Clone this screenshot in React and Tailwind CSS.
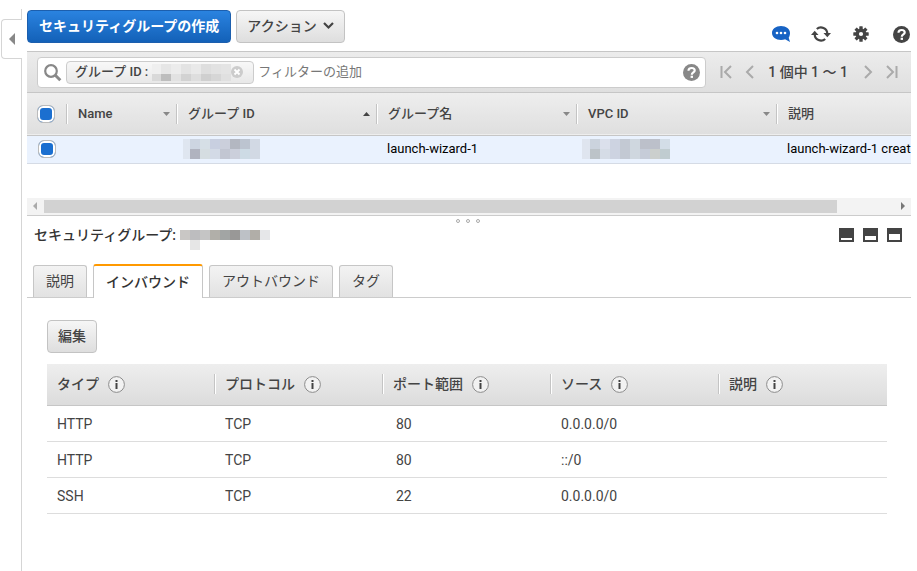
import { useState } from 'react'

const FONT = "font-[Roboto,'Noto_Sans_CJK_JP',sans-serif]"

const BUTTON =
  'flex h-[33px] items-center rounded-[4px] border border-[#c3c3c3] bg-linear-to-b from-[#f6f6f6] to-[#dedede] text-sm font-medium text-[#444]'

const groupColumns = [
  { id: 'name', label: 'Name', width: 'w-[110px]', sort: 'down' },
  { id: 'groupId', label: 'グループ ID', width: 'w-[200px]', sort: 'up' },
  { id: 'groupName', label: 'グループ名', width: 'w-[200px]', sort: 'down' },
  { id: 'vpc', label: 'VPC ID', width: 'w-[200px]', sort: 'down' },
  { id: 'description', label: '説明', width: 'w-[400px]' },
]

const tabs = ['説明', 'インバウンド', 'アウトバウンド', 'タグ']

const ruleColumns = ['タイプ', 'プロトコル', 'ポート範囲', 'ソース', '説明']

const rules = [
  { type: 'HTTP', protocol: 'TCP', port: '80', source: '0.0.0.0/0' },
  { type: 'HTTP', protocol: 'TCP', port: '80', source: '::/0' },
  { type: 'SSH', protocol: 'TCP', port: '22', source: '0.0.0.0/0' },
]

// masked values, each row is a list of 10px cells, cut is taken off the left
const masks = {
  filter: {
    cut: 1,
    height: 17,
    rows: [
      ['#efefef', '#e6e6e6', '#ececec', '#e3e3e3', '#e9e9e9', '#dedede', '#e2e2e2', '#e4e4e4'],
      ['#d9d9d9', '#bdbdbd', '#e2e2e2', '#d2d2d2', '#dedede', '#cfcfcf', '#d6d6d6', '#e0e0e0'],
    ],
  },
  groupId: {
    cut: 3,
    height: 20,
    rows: [
      ['#dfe6f0', '#cdd5e1', '#d6dfe6', '#c8cfe0', '#cbcfdb', '#b3b7c1', '#bcc4d0', '#d2d9e4'],
      ['#dfe6f0', '#b0b3bf', '#d5dde1', '#d3dae6', '#c2c6d2', '#cbcfdb', '#cddbe5', '#d2d9e4'],
    ],
  },
  vpc: {
    cut: 2,
    height: 20,
    rows: [
      ['#dfe5ef', '#cbd3dd', '#dbe0ec', '#cdd3e1', '#c3c9d3', '#cfd7df', '#bcc0ca', '#bcc0ca', '#d3dde7'],
      ['#dfe5ef', '#bcc3c8', '#d5dce6', '#cdd3e1', '#c3c9d3', '#cfd7df', '#c6ccd8', '#cbcfcd', '#c0ccd0'],
    ],
  },
  title: {
    cut: 0,
    height: 20,
    rows: [
      ['#c9c7c5', '#bdbdbf', '#c5c5c5', '#b1afa9', '#a2a5a4', '#999897', '#bdc1c6', '#b1aea8', '#e6e7e9'],
      ['#ffffff', '#e6e6e6'],
    ],
  },
}

function Mask({ name }) {
  const { rows, height, cut } = masks[name]
  const width = rows[0].length * 10 - cut
  return (
    <svg width={width} height={height} viewBox={`${cut} 0 ${width} ${height}`} className="block shrink-0" shapeRendering="crispEdges" aria-hidden="true">
      {rows.map((row, y) =>
        row.map((color, x) => (
          <rect key={`${x}-${y}`} x={x * 10} y={y * 10} width="10" height="10" fill={color} />
        ))
      )}
    </svg>
  )
}

function CommentIcon() {
  return (
    <svg width="20" height="18" viewBox="0 0 20 18" aria-hidden="true">
      <path d="M10 1C4.800 1 1 4 1 8s3.800 7 9 7c1.500 0 2.900-.2 4.100-.7L19 17l-1.300-4.300C18.500 11.400 19 9.800 19 8c0-4-3.800-7-9-7z" fill="#1763c4" />
      <circle cx="6" cy="8" r="1.300" fill="#fff" />
      <circle cx="10" cy="8" r="1.300" fill="#fff" />
      <circle cx="14" cy="8" r="1.300" fill="#fff" />
    </svg>
  )
}

function RefreshIcon() {
  return (
    <svg width="20" height="18" viewBox="0 0 20 18" fill="none" stroke="#444" strokeWidth="2.200" aria-hidden="true">
      <path d="M5.800 4A6.300 6.300 0 0 1 16.300 8.500" />
      <path d="M14.200 14A6.300 6.300 0 0 1 3.700 9.500" />
      <path d="M12.500 8H20l-3.700 4.300z" fill="#444" stroke="none" />
      <path d="M0 10h7.500L3.700 5.700z" fill="#444" stroke="none" />
    </svg>
  )
}

function GearIcon() {
  return (
    <svg width="16" height="16" viewBox="-8 -8 16 16" aria-hidden="true">
      {[0, 45, 90, 135].map((angle) => (
        <rect key={angle} x="-1.700" y="-7.700" width="3.400" height="15.400" rx=".5" fill="#444" transform={`rotate(${angle})`} />
      ))}
      <circle r="5.400" fill="#444" />
      <circle r="2.100" fill="#fff" />
    </svg>
  )
}

function HelpIcon({ color }) {
  return (
    <svg width="17" height="17" viewBox="0 0 17 17" aria-hidden="true">
      <circle cx="8.500" cy="8.500" r="8.500" fill={color} />
      <path d="M5.500 6.700c0-1.700 1.300-2.700 3.100-2.700s3.100 1 3.100 2.500c0 2-2.900 1.900-2.900 4.200" fill="none" stroke="#fff" strokeWidth="2.200" />
      <rect x="7.600" y="11.700" width="2.400" height="2.200" fill="#fff" />
    </svg>
  )
}

function InfoIcon() {
  return (
    <svg width="17" height="17" viewBox="0 0 17 17" aria-hidden="true">
      <circle cx="8.500" cy="8.500" r="7.900" fill="#f2f2f2" stroke="#8c8c8c" />
      <rect x="7.500" y="4" width="2" height="2" fill="#444" />
      <rect x="7.500" y="7" width="2" height="6" fill="#444" />
    </svg>
  )
}

function PageIcon({ d }) {
  return (
    <svg width="12" height="14" viewBox="0 0 12 14" fill="none" stroke="#aaa" strokeWidth="2" aria-hidden="true">
      <path d={d} />
    </svg>
  )
}

// dark square with a white pane, the pane height tells the split
function PaneIcon({ pane }) {
  return (
    <svg width="15" height="14" viewBox="0 0 15 14" shapeRendering="crispEdges" aria-hidden="true">
      <rect width="15" height="14" fill="#444" />
      <rect x="2" y={12 - pane} width="11" height={pane} fill="#fff" />
    </svg>
  )
}

function Checkbox({ label, checked, onChange }) {
  return (
    <input
      type="checkbox"
      aria-label={label}
      checked={checked}
      onChange={onChange}
      className="block size-[18px] appearance-none rounded-[6px] border border-[#bbb] bg-white checked:bg-[#1b6fd0] checked:shadow-[inset_0_0_0_2px_#fff]"
    />
  )
}

function Toolbar() {
  return (
    <div className="flex items-center gap-[5px] pt-[9px] pb-2">
      <button className="h-[33px] rounded-[4px] border border-[#1c5fae] bg-linear-to-b from-[#2a83e0] to-[#1361b8] px-[11px] text-sm font-bold text-white">
        セキュリティグループの作成
      </button>
      <button className={`${BUTTON} gap-[6px] px-[10px]`}>
        アクション
        <svg width="11" height="8" viewBox="0 0 11 8" fill="none" stroke="#444" strokeWidth="2.200" aria-hidden="true">
          <path d="M1 1l4.500 4.500L10 1" />
        </svg>
      </button>
      <div className="ml-auto flex items-center gap-5 pt-4">
        <button aria-label="フィードバック" className="flex w-5 justify-center"><CommentIcon /></button>
        <button aria-label="更新" className="flex w-5 justify-center"><RefreshIcon /></button>
        <button aria-label="設定" className="flex w-5 justify-center"><GearIcon /></button>
        <button aria-label="ヘルプ" className="flex w-5 justify-center"><HelpIcon color="#444" /></button>
      </div>
    </div>
  )
}

function FilterBar() {
  return (
    <div className="flex h-[42px] items-center border-y border-[#c6c6c6] bg-linear-to-b from-[#ececec] to-[#dfdfdf] pl-[10px] pr-[13px]">
      <div className="flex h-[31px] min-w-0 flex-1 items-center rounded-[4px] border border-[#ccc] bg-white pl-[5px] pr-[5px]">
        <svg width="19" height="19" viewBox="0 0 19 19" fill="none" stroke="#888" aria-hidden="true">
          <circle cx="8" cy="8" r="5.800" strokeWidth="2.200" />
          <path d="M12.300 12.300l5 5" strokeWidth="3" />
        </svg>
        <span className="ml-1 flex h-[23px] shrink-0 items-center rounded-[4px] border border-[#ccc] bg-linear-to-b from-[#f8f8f8] to-[#e8e8e8] pl-2 pr-[10px] text-[13px] font-medium text-[#444]">
          <span className="mr-1">グループ ID :</span>
          <Mask name="filter" />
          <button aria-label="フィルターを削除">
            <svg width="12" height="12" viewBox="0 0 12 12" aria-hidden="true">
              <circle cx="6" cy="6" r="6" fill="#ccc" />
              <path d="M3.500 3.500l5 5M8.500 3.500l-5 5" stroke="#fff" strokeWidth="1.800" />
            </svg>
          </button>
        </span>
        <input
          type="text"
          aria-label="フィルターの追加"
          placeholder="フィルターの追加"
          className="ml-1 min-w-0 flex-1 text-[13px] text-[#444] outline-none placeholder:text-[#777]"
        />
        <button aria-label="検索のヘルプ"><HelpIcon color="#888" /></button>
      </div>
      <div className="ml-[14px] flex items-center gap-3 text-sm font-medium text-[#444]">
        <button aria-label="最初のページ"><PageIcon d="M1.500 1v12M11 1L5 7l6 6" /></button>
        <button aria-label="前のページ"><PageIcon d="M9 1L3 7l6 6" /></button>
        <span className="pr-[2px]">1 個中 1 ～ 1</span>
        <button aria-label="次のページ"><PageIcon d="M3 1l6 6-6 6" /></button>
        <button aria-label="最後のページ"><PageIcon d="M1 1l6 6-6 6M10.500 1v12" /></button>
      </div>
    </div>
  )
}

function GroupTable() {
  const [selected, setSelected] = useState(true)
  const toggle = () => setSelected(!selected)

  return (
    <div className="overflow-hidden">
      <table className="w-[1150px] table-fixed text-left text-[13px]">
        <thead>
          <tr className="h-[42px] border-b border-[#c6c6c6] bg-linear-to-b from-[#eee] to-[#dfdfdf] text-[#444]">
            <th className="w-10 pl-[10px]">
              <Checkbox label="すべて選択" checked={selected} onChange={toggle} />
            </th>
            {groupColumns.map((column) => (
              <th key={column.id} className={`${column.width} font-medium`}>
                <div className="-ml-px flex h-5 items-center border-l border-[#c4c4c4] pl-[11px] pr-[7px] shadow-[inset_1px_0_0_#fff]">
                  <span className="flex-1">{column.label}</span>
                  {column.sort && (
                    <svg width="7" height="4" viewBox="0 0 7 4" aria-hidden="true">
                      <path
                        d={column.sort === 'up' ? 'M0 4h7L3.500 0z' : 'M0 0h7L3.500 4z'}
                        fill={column.sort === 'up' ? '#444' : '#888'}
                      />
                    </svg>
                  )}
                </div>
              </th>
            ))}
          </tr>
        </thead>
        <tbody>
          <tr className="h-7 border-b border-[#d5dbe5] bg-[#eaf2fe] text-black">
            <td className="pl-[11px]">
              <Checkbox label="launch-wizard-1" checked={selected} onChange={toggle} />
            </td>
            <td />
            <td className="pl-[6px]"><Mask name="groupId" /></td>
            <td className="pl-[10px]">launch-wizard-1</td>
            <td className="pl-[5px]"><Mask name="vpc" /></td>
            <td className="pl-[10px]">launch-wizard-1 creat</td>
          </tr>
        </tbody>
      </table>
      <div className="mt-[34px] flex h-[18px] items-center border-b border-[#ccc] bg-[#f3f3f3]">
        <svg width="17" height="8" viewBox="0 0 17 8" aria-hidden="true"><path d="M10 0v8L6 4z" fill="#aaa" /></svg>
        <div className="flex-1">
          <div className="h-[13px] w-[93%] bg-[#d2d2d2]" />
        </div>
        <svg width="14" height="8" viewBox="0 0 14 8" aria-hidden="true"><path d="M4 0v8l4-4z" fill="#777" /></svg>
      </div>
    </div>
  )
}

function RulesTable() {
  return (
    <table className="mt-[11px] w-full table-fixed text-left text-sm text-[#444]">
      <thead>
        <tr className="h-[42px] border-b border-[#c6c6c6] bg-linear-to-b from-[#eee] to-[#dcdcdc]">
          {ruleColumns.map((label) => (
            <th key={label} className="group font-medium">
              <div className="-ml-px flex h-5 items-center gap-[9px] border-l border-[#c4c4c4] pl-[10px] shadow-[inset_1px_0_0_#fff] group-first:border-transparent group-first:shadow-none">
                {label}
                <InfoIcon />
              </div>
            </th>
          ))}
        </tr>
      </thead>
      <tbody>
        {rules.map((rule, i) => (
          <tr key={i} className="h-9 border-b border-[#ddd]">
            <td className="pl-[10px]">{rule.type}</td>
            <td className="pl-[10px]">{rule.protocol}</td>
            <td className="pl-[13px]">{rule.port}</td>
            <td className="pl-[10px]">{rule.source}</td>
            <td />
          </tr>
        ))}
      </tbody>
    </table>
  )
}

function Details() {
  const [active, setActive] = useState('インバウンド')

  return (
    <section>
      <div className="flex h-[11px] items-center justify-center gap-[6px] pr-[2px]">
        {[0, 1, 2].map((dot) => (
          <span key={dot} className="size-[4px] rounded-full border border-[#aaa]" />
        ))}
      </div>
      <div className="flex h-[37px] items-start gap-1 pr-[9px] pl-[7px]">
        <h2 className="text-sm leading-4 font-medium text-[#333]">セキュリティグループ:</h2>
        <div className="pt-[3px]"><Mask name="title" /></div>
        <div className="ml-auto flex gap-[9px] pt-px">
          <button aria-label="最小化"><PaneIcon pane={2} /></button>
          <button aria-label="分割"><PaneIcon pane={4} /></button>
          <button aria-label="最大化"><PaneIcon pane={6} /></button>
        </div>
      </div>
      <div role="tablist" className="flex items-end gap-[6px] border-b border-[#ccc] pl-[6px]">
        {tabs.map((tab) => (
          <button
            key={tab}
            role="tab"
            aria-selected={tab === active}
            onClick={() => setActive(tab)}
            className={`rounded-t-[3px] border border-b-0 border-[#c6c6c6] px-3 text-sm ${
              tab === active
                ? '-mb-px h-[34px] border-t-2 border-t-[#f90] bg-white font-medium text-[#333]'
                : 'h-8 bg-linear-to-b from-[#f3f3f3] to-[#e2e2e2] text-[#444]'
            }`}
          >
            {tab}
          </button>
        ))}
      </div>
      <div className="pt-[22px] pr-6 pb-6 pl-5">
        <button className={`${BUTTON} px-[10px]`}>編集</button>
        <RulesTable />
      </div>
    </section>
  )
}

export default function App() {
  return (
    <div className={`${FONT} flex min-h-screen bg-white`}>
      <aside className="flex w-[22px] shrink-0 flex-col pt-[9px]">
        <div className="h-[10px] border-r border-[#d5d5d5]" />
        <button
          aria-label="ナビゲーションを開く"
          className="ml-px flex h-10 items-center justify-center rounded-l-[4px] border border-r-0 border-[#d5d5d5]"
        >
          <svg width="6" height="12" viewBox="0 0 6 12" aria-hidden="true"><path d="M6 0v12L0 6z" fill="#888" /></svg>
        </button>
        <div className="flex-1 border-r border-[#d5d5d5]" />
      </aside>
      <main className="min-w-0 flex-1 pr-[6px] pl-[5px]">
        <Toolbar />
        <FilterBar />
        <GroupTable />
        <Details />
      </main>
    </div>
  )
}
